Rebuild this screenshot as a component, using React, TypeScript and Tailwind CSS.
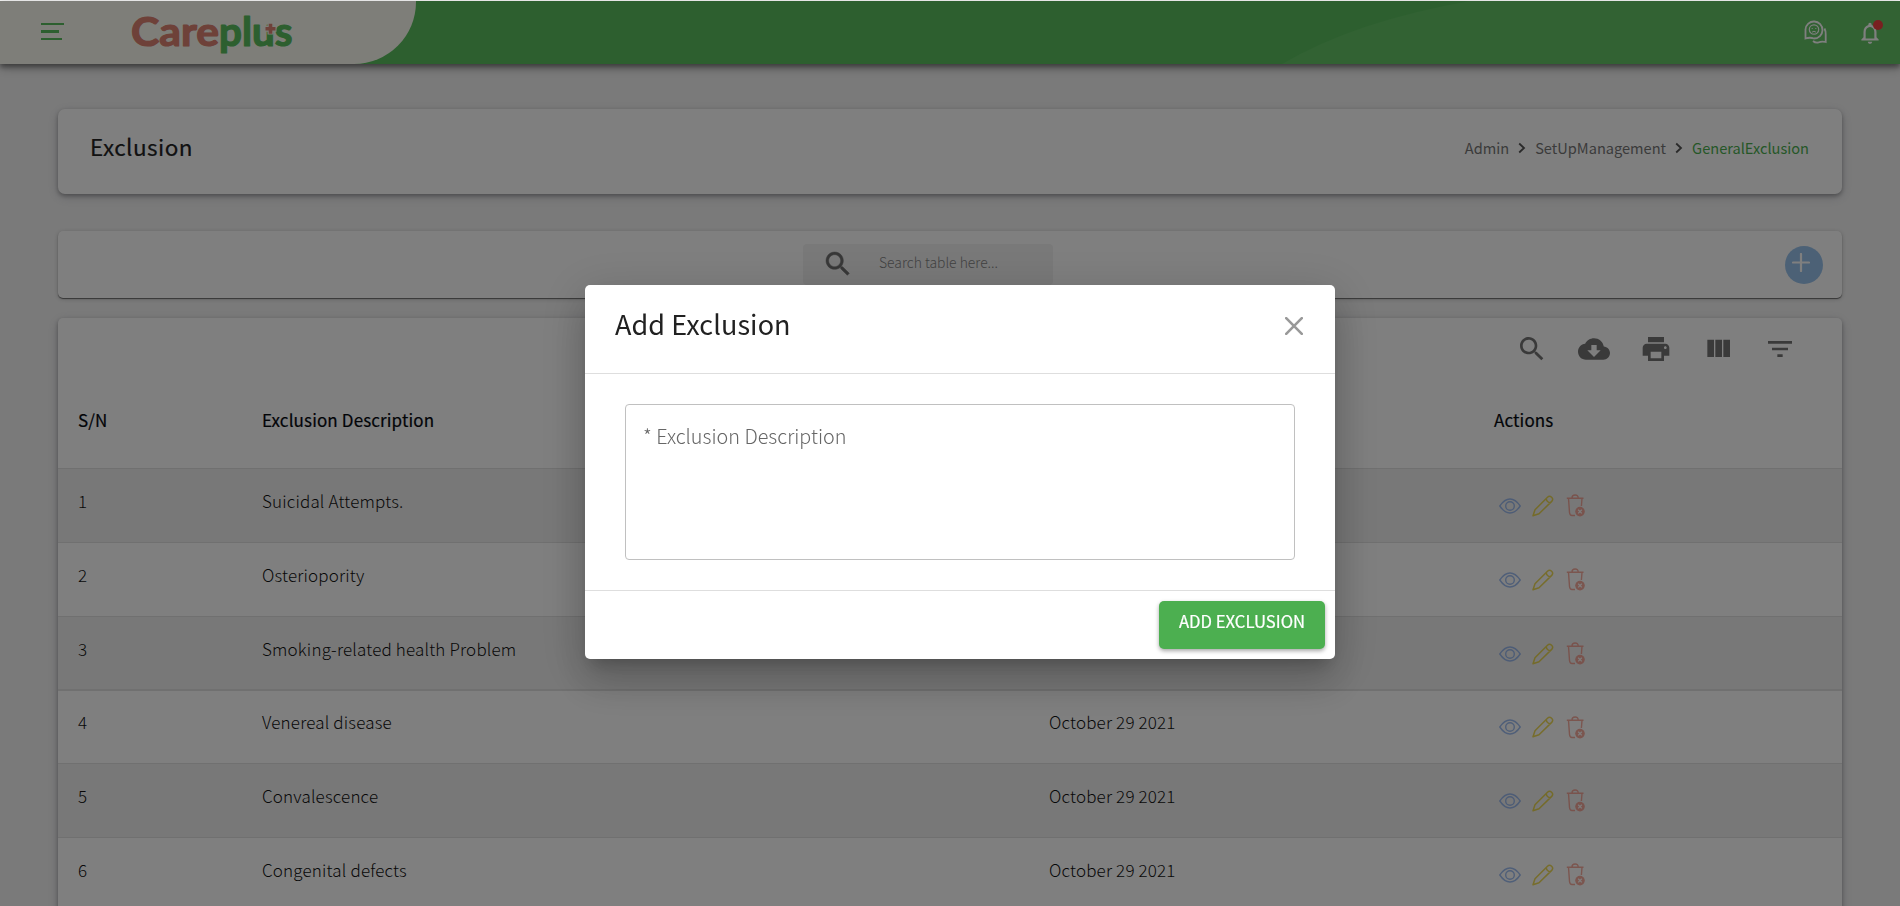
import React from "react";

const rows = [
  { name: "Suicidal Attempts.", cls: "h-[74px] bg-[#f1f1f1] border-b" },
  { name: "Osteriopority", cls: "h-[74px] bg-white border-b" },
  { name: "Smoking-related health Problem", cls: "h-[74px] bg-[#f1f1f1] border-b-2 pt-px" },
  { name: "Venereal disease", cls: "h-[73px] bg-white border-b" },
  { name: "Convalescence", cls: "h-[74px] bg-[#f1f1f1] border-b" },
  { name: "Congenital defects", cls: "h-[74px] bg-white border-b" },
];

const SEARCH =
  "M15.5 14h-.79l-.28-.27C15.41 12.59 16 11.11 16 9.5 16 5.91 13.09 3 9.5 3S3 5.91 3 9.5 5.91 16 9.5 16c1.61 0 3.09-.59 4.23-1.57l.27.28v.79l5 4.99L20.49 19l-4.99-5zm-6 0C7.01 14 5 11.99 5 9.5S7.01 5 9.5 5 14 7.01 14 9.5 11.99 14 9.5 14z";

const tools = [
  SEARCH,
  "M19.35 10.04C18.67 6.59 15.64 4 12 4 9.11 4 6.6 5.64 5.35 8.04 2.34 8.36 0 10.91 0 14c0 3.31 2.69 6 6 6h13c2.76 0 5-2.24 5-5 0-2.64-2.05-4.78-4.65-4.96zM17 13l-5 5-5-5h3V9h4v4h3z",
  "M19 8H5c-1.66 0-3 1.34-3 3v6h4v4h12v-4h4v-6c0-1.66-1.34-3-3-3zm-3 11H8v-5h8v5zm3-7c-.55 0-1-.45-1-1s.45-1 1-1 1 .45 1 1-.45 1-1 1zm-1-9H6v4h12V3z",
  "M10 18h5V5h-5v13zm-6 0h5V5H4v13zM16 5v13h5V5h-5z",
  "M10 18h4v-2h-4v2zM3 6v2h18V6H3zm3 7h12v-2H6v2z",
];

function Logo() {
  return (
    <svg width="176" height="60" viewBox="0 -6 176 60" className="ml-[63px]" fontFamily="Lato, sans-serif" fontWeight="700" fontSize="39.500" strokeWidth="1.200" strokeLinejoin="round">
      <text x="3" y="37" textLength="88" lengthAdjust="spacingAndGlyphs" fill="#dc8272" stroke="#dc8272">Care</text>
      <text x="91" y="37" textLength="73.500" lengthAdjust="spacingAndGlyphs" fill="#5abf5e" stroke="#5abf5e">plus</text>
      <path d="M136.500 19.700h12M142.500 13.500v12" stroke="#fcfdf2" strokeWidth="6" />
      <path d="M137.500 19.700h10M142.500 14.700v10" stroke="#dc8272" strokeWidth="3.600" />
    </svg>
  );
}

function Header() {
  return (
    <header className="relative z-10 flex h-[63px] items-center justify-between bg-[#5abf5e] shadow-[0_3px_5px_rgba(0,0,0,0.4),0_5px_10px_rgba(0,0,0,0.2)]">
      <svg className="absolute inset-y-0 right-0" width="620" height="63" viewBox="0 0 620 63">
        <path d="M2 63Q75 20 190 0H620V63Z" fill="#64c467" />
      </svg>
      <div className="flex h-full w-[416px] items-center rounded-br-[62px] bg-[#fcfdf2]">
        <svg width="24" height="18" viewBox="0 0 24 18" className="mb-[2px] ml-[41px] fill-[#5abf5e]">
          <path d="M0 0h23v2H0zM0 7h18v3H0zM0 15h21v2H0z" />
        </svg>
        <Logo />
      </div>
      <div className="relative flex items-center pr-[17px]">
        <svg width="25" height="25" viewBox="0 0 25 25" className="mr-[28px]" fill="none" stroke="#fff" strokeWidth="1.800">
          <path d="M1.500 18.500V9.500a8.500 8.500 0 1 1 8.500 9Q6 17 1.500 18.500Z" />
          <circle cx="10" cy="9.500" r="4.700" strokeWidth="1.200" />
          <path d="M8.200 8v1M11.800 8v1M8 12.200q2-2 4 0" strokeWidth="1" />
          <path d="M20.500 8.500q1.500 3 1.200 6v7.500q-4-1-7.500.5-3 .5-5.200-1.500" />
        </svg>
        <svg width="26" height="26" viewBox="0 0 24 24" fill="#fff">
          <path d="M12 22c1.100 0 2-.9 2-2h-4c0 1.100.9 2 2 2zm6-6v-5c0-3.070-1.630-5.640-4.500-6.320V4c0-.83-.67-1.500-1.500-1.500s-1.500.67-1.500 1.500v.68C7.640 5.360 6 7.920 6 11v5l-2 2v1h16v-1l-2-2zm-2 1H8v-6c0-2.480 1.510-4.500 4-4.500s4 2.020 4 4.500v6z" />
        </svg>
        <span className="absolute top-0 right-[17px] size-[10px] rounded-full bg-[#f04040]" />
      </div>
    </header>
  );
}

function Chevron() {
  return (
    <svg width="8" height="12" viewBox="0 0 8 12" fill="none" stroke="#555" strokeWidth="1.800" className="mx-[9px] mt-px">
      <path d="M1.200 1.500L6 6 1.200 10.500" />
    </svg>
  );
}

function Actions() {
  return (
    <div className="flex items-center opacity-65">
      <svg width="22" height="22" viewBox="0 0 22 22" fill="none" stroke="#6d9ceb" strokeWidth="1.400">
        <path d="M.8 11Q5.500 4 11 4T21.200 11Q16.500 18 11 18T.8 11Z" />
        <circle cx="11" cy="11" r="4.300" />
      </svg>
      <svg width="22" height="22" viewBox="0 0 22 22" fill="none" stroke="#e6c800" strokeWidth="1.500" strokeLinejoin="round" className="ml-[11px]">
        <path d="M1 20.800L3 14.800 15.500 2.200Q17.500.3 19.600 2.200T19.700 6.400L7 18.800ZM14.200 3.600Q14.800 7.400 18.400 7.700" />
      </svg>
      <svg width="20" height="23" viewBox="0 0 20 23" fill="none" stroke="#f4806c" strokeWidth="1.400" className="ml-[12px]">
        <path d="M.8 4.200H17.500M6 4Q6 1 9.100 1T12.200 4M2.500 4.200L3.500 18.500Q3.800 21.500 6 21.500H9M16 4.200L15.400 12" />
        <circle cx="14" cy="17.600" r="4.800" fill="#f4806c" stroke="none" />
        <path d="M12.200 15.800l3.600 3.600M15.800 15.800l-3.600 3.600" stroke="#fff" strokeWidth="1.300" />
      </svg>
    </div>
  );
}

const cardShadow = "shadow-[0_2px_4px_rgba(0,0,0,0.3),0_3px_12px_rgba(60,60,90,0.2)]";

export default function App() {
  return (
    <div className="h-[906px] overflow-hidden bg-[#f5f5f5] font-['Noto_Sans_CJK_SC','Open_Sans',sans-serif] text-[#222]">
      <div className="h-px" />
      <Header />
      <main className="px-[58px] pt-[45px]">
        <section className={"flex h-[85px] items-center justify-between rounded-[7px] bg-white pr-[33px] pb-[8px] pl-[32px] " + cardShadow}>
          <h1 className="pb-px text-[22.500px] font-normal tracking-[0.45px] [-webkit-text-stroke:0.2px_#222]">Exclusion</h1>
          <nav className="flex items-center pt-px text-[14.600px] font-normal text-[#777]">
            <span>Admin</span>
            <Chevron />
            <span>SetUpManagement</span>
            <Chevron />
            <span className="text-[#4caf50]">GeneralExclusion</span>
          </nav>
        </section>

        <section className="mt-[37px] flex h-[67px] items-center rounded-[5px] bg-white shadow-[0_1px_1px_rgba(0,0,0,0.5),0_1px_5px_rgba(0,0,0,0.2)]">
          <div className="ml-[745px] flex h-[41px] w-[250px] items-center rounded-[4px] bg-[#f3f3f3]">
            <svg width="32" height="32" viewBox="0 0 24 24" className="mb-[2px] ml-[19px]" fill="#707070" stroke="#707070" strokeWidth="0.350">
              <path d={SEARCH} />
            </svg>
            <span className="mb-[4px] ml-[25px] text-[13.900px] font-light text-[#858585]">Search table here...</span>
          </div>
          <div className="mr-[19px] ml-auto size-[38px] rounded-full bg-[#99c3ec] pt-[7px] pl-[7px]">
            <svg width="18" height="19" viewBox="0 0 18 19" stroke="#fff" strokeWidth="2.200" strokeLinecap="round">
              <path d="M1 9.500H17M9 1V18" />
            </svg>
          </div>
        </section>

        <section className={"mt-[20px] h-[620px] rounded-t-[5px] bg-white " + cardShadow}>
          <div className="flex justify-end gap-[30px] pt-[15px] pr-[46px]">
            {tools.map((d) => (
              <svg key={d} width="32" height="32" viewBox="0 0 24 24" fill="#757575">
                <path d={d} />
              </svg>
            ))}
          </div>
          <div className="grid h-[104px] grid-cols-[184px_787px_445px_1fr] border-b border-[#e0e0e0] pt-[41px] pl-[20px] text-[17px] leading-[28px] font-normal tracking-[0.13px] text-[#05080f] [-webkit-text-stroke:0.2px_#05080f]">
            <span>S/N</span>
            <span>Exclusion Description</span>
            <span>Date Created</span>
            <span>Actions</span>
          </div>
          {rows.map((r, i) => (
            <div
              key={r.name}
              className={"grid grid-cols-[184px_787px_450px_1fr] items-center border-[#e0e0e0] pl-[20px] text-[17px] leading-[28px] font-light tracking-[0.17px] text-[#111] " + r.cls}
            >
              <span className="pb-[10px]">{i + 1}</span>
              <span className="pb-[10px]">{r.name}</span>
              <span className="pb-[10px]">October 29 2021</span>
              <Actions />
            </div>
          ))}
        </section>
      </main>

      <div className="fixed inset-x-0 top-px bottom-0 z-20 bg-black/50">
        <div
          role="dialog"
          className="mt-[284px] ml-[585px] flex h-[374px] w-[750px] flex-col rounded-[5px] bg-white shadow-[0_11px_15px_-7px_rgba(0,0,0,0.2),0_24px_38px_3px_rgba(0,0,0,0.14),0_9px_46px_8px_rgba(0,0,0,0.12)]"
        >
          <div className="flex h-[89px] items-start justify-between border-b border-[#dedede] pt-[19px] pr-[32px] pl-[30px]">
            <h2 className="text-[27px] leading-[40px] font-normal tracking-[0.08px] text-[#212121]">Add Exclusion</h2>
            <svg width="18" height="18" viewBox="0 0 18 18" stroke="#999" strokeWidth="2.600" strokeLinecap="round" className="mt-[13px]">
              <path d="M1.200 1.200L16.800 16.800M16.800 1.200L1.200 16.800" />
            </svg>
          </div>
          <div className="flex-1 px-[40px] pt-[30px]">
            <div className="h-[156px] w-[670px] rounded-[4px] border border-[#c0c0c0] pt-[16px] pl-[17px] text-[19.800px] leading-[30px] font-light text-[#666]">
              * Exclusion Description
            </div>
          </div>
          <div className="flex h-[69px] justify-end border-t border-[#dedede] pt-[10px] pr-[10px]">
            <button className="h-[48px] w-[166px] rounded-[5px] bg-[#4caf50] pb-[6px] text-[16.700px] font-normal text-white shadow-[0_2px_4px_rgba(0,0,0,0.35)] [-webkit-text-stroke:0.2px_white]">
              ADD EXCLUSION
            </button>
          </div>
        </div>
      </div>
    </div>
  );
}
